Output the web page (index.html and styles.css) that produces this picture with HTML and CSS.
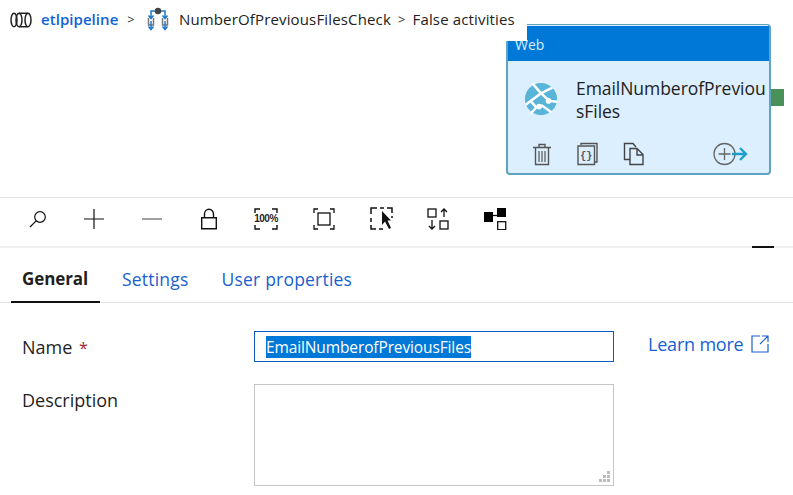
FILE: index.html
```html
<!DOCTYPE html>
<html lang="en">
<head>
<meta charset="utf-8">
<title>False activities</title>
<link rel="stylesheet" href="styles.css">
</head>
<body>
<section class="canvas">
  <div class="card">
    <div class="card-head">Web</div>
    <div class="card-body">
      <svg class="web-icon" width="34" height="34" viewBox="0 0 36 36"><circle cx="18" cy="18" r="17" fill="#59b4d9"/><path d="M9 1.500L18 12L7 20L2 24M7 20L13 27L7 33.500M18 12L30 6M18 12L27 20L35 21M13 27L19 25L29 32" fill="none" stroke="#fff" stroke-width="2.600"/><circle cx="26" cy="20" r="3" fill="#fff"/><circle cx="16" cy="26" r="3" fill="#fff"/></svg>
      <div class="card-name">EmailNumberofPreviousFiles</div>
    </div>
    <div class="card-actions">
      <svg class="act" width="20" height="24" viewBox="0 0 20 24" fill="none" stroke="#555" stroke-width="1.400"><path d="M1 5.500H19M7 5V2.500H13V5M3.500 6V22.500H16.500V6"/><path d="M7 9V20M10 9V20M13 9V20" stroke-width="1.200"/></svg>
      <svg class="act" width="21" height="24" viewBox="0 0 21 24" fill="none" stroke="#555" stroke-width="1.400"><path d="M4 3V1.500H20V20H18M1 4H17.500V22.500H1Z"/><text x="9.200" y="16.500" class="act-brace" text-anchor="middle">{}</text></svg>
      <svg class="act" width="21" height="24" viewBox="0 0 21 24" fill="none" stroke="#444" stroke-width="1.400"><path d="M7 17.500H1.500V1.500H10L13 5"/><path d="M7 6.500H14L20 12.500V22.500H7ZM14 7V13H20"/></svg>
      <svg class="act-add" width="36" height="24" viewBox="0 0 36 24" fill="none"><circle cx="11.500" cy="12" r="10.500" stroke="#666" stroke-width="1.300"/><path d="M5.500 12H17.500M11.500 6V18" stroke="#666" stroke-width="1.300"/><path d="M19 12H33M27 6L33 12L27 18" stroke="#1e9ecb" stroke-width="2.400"/></svg>
    </div>
    <span class="card-port"></span>
  </div>
  <nav class="crumbs">
    <svg class="crumb-icon" width="22" height="16" viewBox="0 0 22 16" fill="none" stroke="#222" stroke-width="1.500"><ellipse cx="4" cy="8" rx="3" ry="6.800"/><ellipse cx="9" cy="8" rx="3" ry="6.800"/><ellipse cx="18" cy="8" rx="3" ry="6.800"/><path d="M9 1.200H18M9 14.800H18"/></svg>
    <a class="crumb-link">etlpipeline</a>
    <span class="sep sep-first">&gt;</span>
    <svg class="crumb-flow" width="22" height="24" viewBox="0 0 22 24" fill="none"><path d="M1.500 11V18H6.500V11M15.500 11V18H20.500V11" stroke="#777" stroke-width="1.500"/><path d="M11 4H4V11M11 4H18V11M1.500 8.500L4 11.500L6.500 8.500M15.500 8.500L18 11.500L20.500 8.500M4 14V22.500M18 14V22.500M1.500 19.500L4 22.500L6.500 19.500M15.500 19.500L18 22.500L20.500 19.500" stroke="#1f78c8" stroke-width="1.500"/><circle cx="11" cy="4" r="3.200" fill="#444"/></svg>
    <span class="crumb-text">NumberOfPreviousFilesCheck</span>
    <span class="sep">&gt;</span>
    <span class="crumb-text">False activities</span>
  </nav>
</section>

<div class="toolbar">
  <svg class="tool t-search" width="20" height="20" viewBox="0 0 20 20" fill="none" stroke="#111" stroke-width="1.200"><circle cx="12" cy="8" r="5.300"/><path d="M8.200 11.800L2 18"/></svg>
  <svg class="tool t-plus" width="20" height="20" viewBox="0 0 20 20" fill="none" stroke="#111" stroke-width="1.200"><path d="M0 10H20M10 0V20"/></svg>
  <svg class="tool t-minus" width="20" height="20" viewBox="0 0 20 20" fill="none" stroke="#777" stroke-width="1.400"><path d="M0 10H20"/></svg>
  <svg class="tool t-lock" width="16" height="22" viewBox="0 0 16 22" fill="none" stroke="#111" stroke-width="1.400"><path d="M.7 9.700H15.300V20.800H.7ZM3.500 9.500V6A4.500 4.700 0 0 1 12.500 6V9.500"/></svg>
  <div class="tool t-100"><svg width="24" height="22" viewBox="0 0 24 22" fill="none" stroke="#111" stroke-width="1.400"><path d="M6 1H1V5M18 1H23V5M6 21H1V17M18 21H23V17"/></svg><span class="pct">100%</span></div>
  <svg class="tool t-fit" width="22" height="22" viewBox="0 0 22 22" fill="none" stroke="#111" stroke-width="1.300"><path d="M5 1H1V5M17 1H21V5M5 21H1V17M17 21H21V17"/><rect x="5" y="5" width="12" height="12"/></svg>
  <svg class="tool t-select" width="24" height="24" viewBox="0 0 24 24" fill="none"><path d="M1 7V1H7M10 1H14M17 1H22V6M1 11V15M1 18V22H6M9 22H13M22 9V11" stroke="#111" stroke-width="1.500"/><path d="M12 4V18L15 14.500L19 22L21 21L17.500 13.500H21Z" fill="#111"/></svg>
  <svg class="tool t-arrange" width="22" height="22" viewBox="0 0 22 22" fill="none" stroke="#111" stroke-width="1.300"><rect x="1" y="1" width="8" height="8"/><rect x="13" y="13" width="8" height="8"/><path d="M17 9V1M14 4L17 1L20 4M5 12V21M2 18L5 21L8 18"/></svg>
  <svg class="tool t-layout" width="23" height="22" viewBox="0 0 23 22"><rect x="0" y="4" width="9" height="10" fill="#000"/><rect x="13" y="0" width="9" height="9" fill="#000"/><rect x="13.700" y="13.700" width="8" height="8" fill="none" stroke="#111" stroke-width="1.300"/><path d="M9 7.500H13" stroke="#111" stroke-width="1.300" fill="none"/></svg>
  <span class="grip"></span>
</div>

<main class="panel">
  <div class="tabs">
    <a class="tab active">General</a>
    <a class="tab">Settings</a>
    <a class="tab">User properties</a>
  </div>
  <div class="form">
    <div class="labels">
      <div class="label name-label">Name <span class="req">*</span></div>
      <div class="label desc-label">Description</div>
    </div>
    <div class="fields">
      <div class="input"><span class="selected">EmailNumberofPreviousFiles</span></div>
      <div class="textarea">
        <svg class="resize" width="12" height="12" viewBox="0 0 12 12" fill="#bbb"><rect x="8" y="0" width="3" height="3"/><rect x="4" y="4" width="3" height="3"/><rect x="8" y="4" width="3" height="3"/><rect x="0" y="8" width="3" height="3"/><rect x="4" y="8" width="3" height="3"/><rect x="8" y="8" width="3" height="3"/></svg>
      </div>
    </div>
    <a class="learn">Learn more
      <svg width="18" height="18" viewBox="0 0 18 18" fill="none" stroke="#1a5fd0" stroke-width="1.200"><path d="M9 1H1V17H17V9M11 1H17V7M17 1L9 9"/></svg>
    </a>
  </div>
</main>
</body>
</html>
```
FILE: styles.css
```css
* { box-sizing: border-box; }
html, body { margin: 0; padding: 0; }
body {
  width: 793px;
  height: 495px;
  overflow: hidden;
  background: #fff;
  font-family: "Open Sans", "Noto Sans", sans-serif;
  color: #1f1f1f;
}
.canvas { position: relative; height: 197px; }
.crumbs {
  position: absolute;
  left: 0;
  top: 0;
  width: 527px;
  height: 41px;
  padding: 0 0 3px 10px;
  background: #fff;
  display: flex;
  align-items: center;
  font-size: 15px;
  letter-spacing: 0.15px;
  white-space: nowrap;
}
.crumb-icon { margin-right: 9px; margin-top: 1px; }
.crumb-link { color: #0f62d6; font-weight: 600; letter-spacing: 0.05px; }
.sep { margin: 0 7px; font-size: 13px; color: #333; }
.sep-first { margin: 0 12px 0 9px; }
.crumb-flow { margin: 0 10px 0 0; }
.crumb-text { color: #222; }
.card {
  position: absolute;
  left: 506px;
  top: 24px;
  width: 265px;
  height: 151px;
  background: #dcefff;
  border: 2px solid #5ea3bf;
  border-top-width: 1px;
  border-radius: 4px;
}
.card-head {
  margin-top: 1px;
  height: 35px;
  background: #0078d7;
  color: #dcecfa;
  font-size: 14px;
  padding: 10px 0 0 7px;
  line-height: 18px;
}
.card-body { display: flex; padding: 16px 0 0 16px; }
.web-icon { margin-top: 5px; flex: none; }
.card-name {
  margin-left: 18px;
  width: 194px;
  font-size: 17.500px;
  line-height: 23px;
  word-break: break-all;
  letter-spacing: -0.05px;
  color: #222;
}
.card-actions { display: flex; align-items: center; padding: 0 0 0 24px; margin-top: 19px; }
.act { margin-right: 25px; flex: none; }
.act-add { margin-left: 44px; flex: none; }
.act-brace { font-family: "Liberation Mono", monospace; font-size: 10px; font-weight: 700; fill: #555; stroke: none; }
.card-port {
  position: absolute;
  right: -15px;
  top: 64px;
  width: 13px;
  height: 17px;
  background: #4a9159;
}
.toolbar {
  position: relative;
  height: 51px;
  padding-bottom: 6px;
  border-top: 1px solid #e3e3e3;
  border-bottom: 2px solid #efefef;
  display: flex;
  align-items: center;
}
.tool { flex: none; position: relative; }
.t-search { margin-left: 28px; }
.t-plus { margin-left: 36px; }
.t-minus { margin-left: 38px; }
.t-lock { margin-left: 39px; }
.t-100 { margin-left: 37px; width: 24px; height: 22px; }
.t-100 svg { display: block; }
.pct {
  position: absolute;
  left: -2px;
  top: 5px;
  width: 28px;
  text-align: center;
  font-size: 10px;
  line-height: 12px;
  font-weight: 700;
  font-family: "Liberation Sans", sans-serif;
  letter-spacing: -0.5px;
}
.t-fit { margin-left: 35px; }
.t-select { margin-left: 35px; }
.t-arrange { margin-left: 33px; }
.t-layout { margin-left: 35px; }
.grip {
  position: absolute;
  left: 752px;
  bottom: -2px;
  width: 22px;
  height: 2px;
  background: #111;
}
.tabs {
  height: 55px;
  display: flex;
  padding-left: 11px;
  border-bottom: 1px solid #e3e3e3;
}
.tab {
  height: 55px;
  padding: 20px 11px 0;
  font-size: 17.500px;
  line-height: 22px;
  color: #1a5fd0;
  margin-right: 11px;
  letter-spacing: 0.2px;
}
.tab.active {
  padding-right: 12px;
  color: #1f1f1f;
  font-size: 17px;
  font-weight: 700;
  letter-spacing: -0.1px;
  border-bottom: 2px solid #111;
}
.form { display: flex; padding: 28px 0 0 22px; }
.labels { width: 232px; flex: none; }
.label { font-size: 18px; line-height: 24px; }
.name-label { margin-top: 4px; }
.desc-label { margin-top: 28px; }
.req { color: #a4262c; margin-left: 2px; font-size: 16px; }
.fields { width: 360px; flex: none; }
.input {
  height: 31px;
  border: 1px solid #0f5bbd;
  padding: 4px 0 0 11px;
  font-size: 15.500px;
  line-height: 22px;
  letter-spacing: -0.12px;
}
.selected { display: inline-block; background: #0078d7; color: #fff; }
.textarea {
  position: relative;
  margin-top: 22px;
  height: 102px;
  border: 1px solid #c6c6c6;
}
.resize { position: absolute; right: 2px; bottom: 2px; }
.learn {
  margin: 1px 0 0 34px;
  display: flex;
  align-items: flex-start;
  gap: 7px;
  color: #1a5fd0;
  font-size: 18px;
  line-height: 24px;
  letter-spacing: -0.2px;
  height: 28px;
}
.learn svg { margin-top: 3px; }
```
